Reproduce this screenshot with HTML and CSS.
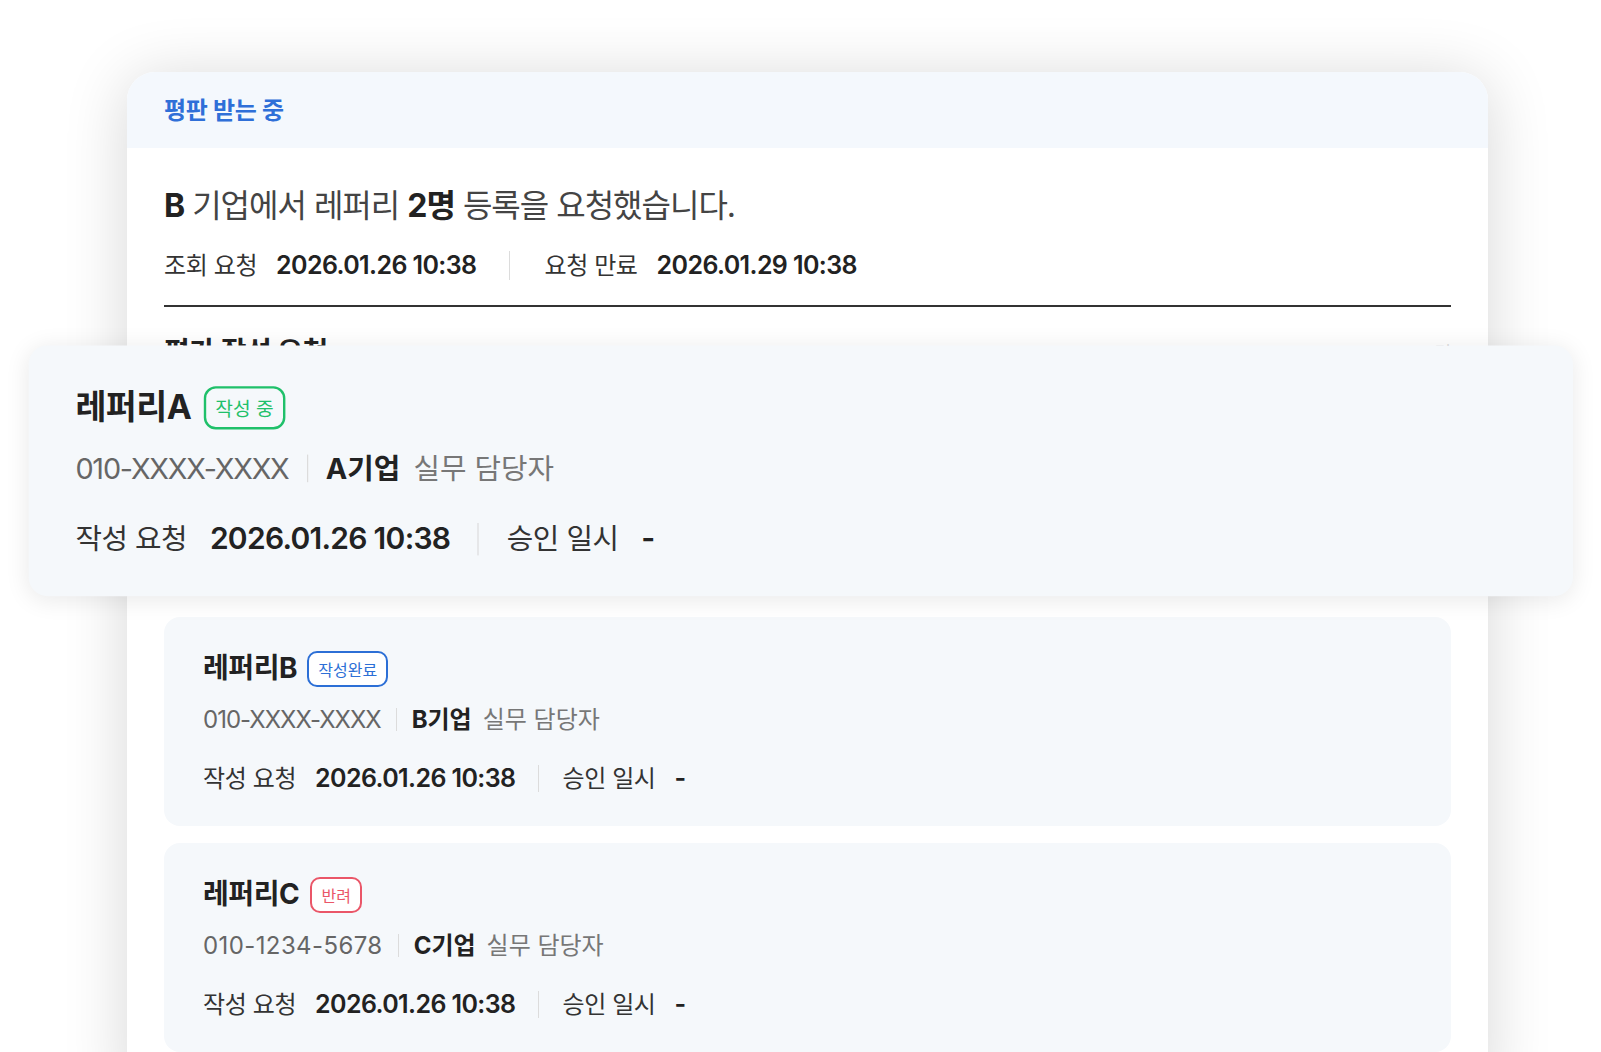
FILE: index.html
```html
<!DOCTYPE html>
<html lang="ko">
<head>
<meta charset="utf-8">
<title>평판 받는 중</title>
<link rel="stylesheet" href="styles.css">
</head>
<body>
<div class="stage">
  <section class="panel">
    <header class="panel-head">평판 받는 중</header>
    <div class="panel-body">
      <h1 class="title"><b>B</b> 기업에서 레퍼리 <b>2명</b> 등록을 요청했습니다.</h1>
      <div class="meta">
        <span class="label">조회 요청</span><span class="value">2026.01.26 10:38</span>
        <span class="sep sep-wide"></span>
        <span class="label">요청 만료</span><span class="value">2026.01.29 10:38</span>
      </div>
      <hr class="divider">
      <div class="list-head">
        <h2>평가 작성 요청</h2>
        <span class="count">3명</span>
      </div>
      <ul class="ref-list">
        <li class="ref is-active">
          <div class="ref-name-row">
            <span class="ref-name">레퍼리A</span>
            <span class="badge badge-progress">작성 중</span>
          </div>
          <div class="ref-contact">
            <span class="phone masked">010-XXXX-XXXX</span><span class="sep"></span><b class="company">A기업</b><span class="role">실무 담당자</span>
          </div>
          <div class="meta ref-dates">
            <span class="label">작성 요청</span><span class="value">2026.01.26 10:38</span>
            <span class="sep"></span>
            <span class="label">승인 일시</span><span class="value">-</span>
          </div>
        </li>
        <li class="ref">
          <div class="ref-name-row">
            <span class="ref-name">레퍼리B</span>
            <span class="badge badge-done">작성완료</span>
          </div>
          <div class="ref-contact">
            <span class="phone masked">010-XXXX-XXXX</span><span class="sep"></span><b class="company">B기업</b><span class="role">실무 담당자</span>
          </div>
          <div class="meta ref-dates">
            <span class="label">작성 요청</span><span class="value">2026.01.26 10:38</span>
            <span class="sep"></span>
            <span class="label">승인 일시</span><span class="value">-</span>
          </div>
        </li>
        <li class="ref">
          <div class="ref-name-row">
            <span class="ref-name">레퍼리C</span>
            <span class="badge badge-reject">반려</span>
          </div>
          <div class="ref-contact">
            <span class="phone">010-1234-5678</span><span class="sep"></span><b class="company">C기업</b><span class="role">실무 담당자</span>
          </div>
          <div class="meta ref-dates">
            <span class="label">작성 요청</span><span class="value">2026.01.26 10:38</span>
            <span class="sep"></span>
            <span class="label">승인 일시</span><span class="value">-</span>
          </div>
        </li>
      </ul>
    </div>
  </section>
</div>
</body>
</html>
```
FILE: styles.css
```css
html, body {
  margin: 0;
  padding: 0;
  background: #ffffff;
  overflow: hidden;
  height: 100%;
}
body {
  font-family: Inter, "Noto Sans CJK KR", sans-serif;
  color: #222;
}
.stage {
  padding: 72px 0 0 127px;
}
.panel {
  width: 1361px;
  background: #fff;
  border-radius: 28px 28px 0 0;
  box-shadow: 0 6px 64px rgba(0, 0, 0, 0.16);
}
.panel-head {
  height: 76px;
  box-sizing: border-box;
  padding: 0 37px 3px;
  display: flex;
  align-items: center;
  background: #f4f8fd;
  border-radius: 28px 28px 0 0;
  color: #2f6fd8;
  font-size: 24px;
  font-weight: 700;
  letter-spacing: -0.3px;
}
.panel-body {
  padding: 0 37px 40px 37px;
}
.title {
  margin: 37px 0 0;
  font-size: 32px;
  line-height: 42px;
  font-weight: 400;
  color: #444;
  letter-spacing: -1px;
}
.title b {
  font-weight: 700;
  color: #222;
}
.meta {
  display: flex;
  align-items: center;
  margin-top: 22px;
  height: 33px;
  font-size: 24px;
  line-height: 33px;
}
.meta .label {
  color: #333;
  letter-spacing: -0.4px;
  margin-right: 19px;
}
.meta .value {
  font-size: 25px;
  font-weight: 600;
  color: #222;
  letter-spacing: -0.6px;
}
.sep {
  display: inline-block;
  width: 1px;
  height: 27px;
  background: #dcdcdc;
  margin: 0 24px;
}
.sep-wide {
  margin: 0 34px 0 33px;
  height: 29px;
}
.divider {
  margin: 23px 0 0;
  border: 0;
  height: 2px;
  background: #333;
}
.list-head {
  display: flex;
  justify-content: space-between;
  align-items: center;
  margin-top: 28px;
  height: 34px;
}
.list-head h2 {
  margin: 0;
  font-size: 28px;
  line-height: 34px;
  font-weight: 700;
  letter-spacing: -0.5px;
  color: #222;
}
.list-head .count {
  font-size: 18px;
  color: #c4c4c4;
}
.ref-list {
  list-style: none;
  margin: 22px 0 0;
  padding: 0;
  display: flex;
  flex-direction: column;
  gap: 17px;
}
.ref {
  background: #f5f8fb;
  border-radius: 16px;
  padding: 33px 39px 31px;
}
.ref.is-active {
  position: relative;
  z-index: 2;
  transform: scale(1.2);
  transform-origin: 677px 228px;
  box-shadow: 0 3px 20px rgba(0, 0, 0, 0.09);
}
.ref-name-row {
  display: flex;
  align-items: center;
  height: 37px;
}
.ref-name {
  font-size: 28px;
  font-weight: 700;
  color: #222;
  letter-spacing: -0.4px;
  line-height: 37px;
}
.badge {
  display: inline-flex;
  align-items: center;
  box-sizing: border-box;
  height: 36px;
  margin-left: 10px;
  padding: 0 9px;
  border: 2px solid currentColor;
  border-radius: 10px;
  font-size: 16px;
  background: #fff;
}
.badge-progress {
  color: #1fc06a;
  background: transparent;
  margin-left: 10px;
  padding: 0 8px;
}
.badge-done {
  color: #2c6fd6;
}
.badge-reject {
  color: #ea5668;
  margin-left: 11px;
}
.ref-contact {
  display: flex;
  align-items: center;
  margin-top: 17px;
  height: 31px;
  font-size: 24px;
  line-height: 31px;
}
.ref-contact .phone {
  color: #666;
  letter-spacing: 0.4px;
}
.ref-contact .phone.masked {
  letter-spacing: -1px;
}
.ref-contact .sep {
  height: 23px;
  margin: 0 15px;
}
.ref-contact .company {
  font-weight: 700;
  color: #222;
  margin-right: 11px;
}
.ref-contact .role {
  color: #777;
}
.ref-dates {
  margin-top: 27px;
}
.ref-dates .sep {
  margin: 0 23px;
  height: 27px;
}
```
